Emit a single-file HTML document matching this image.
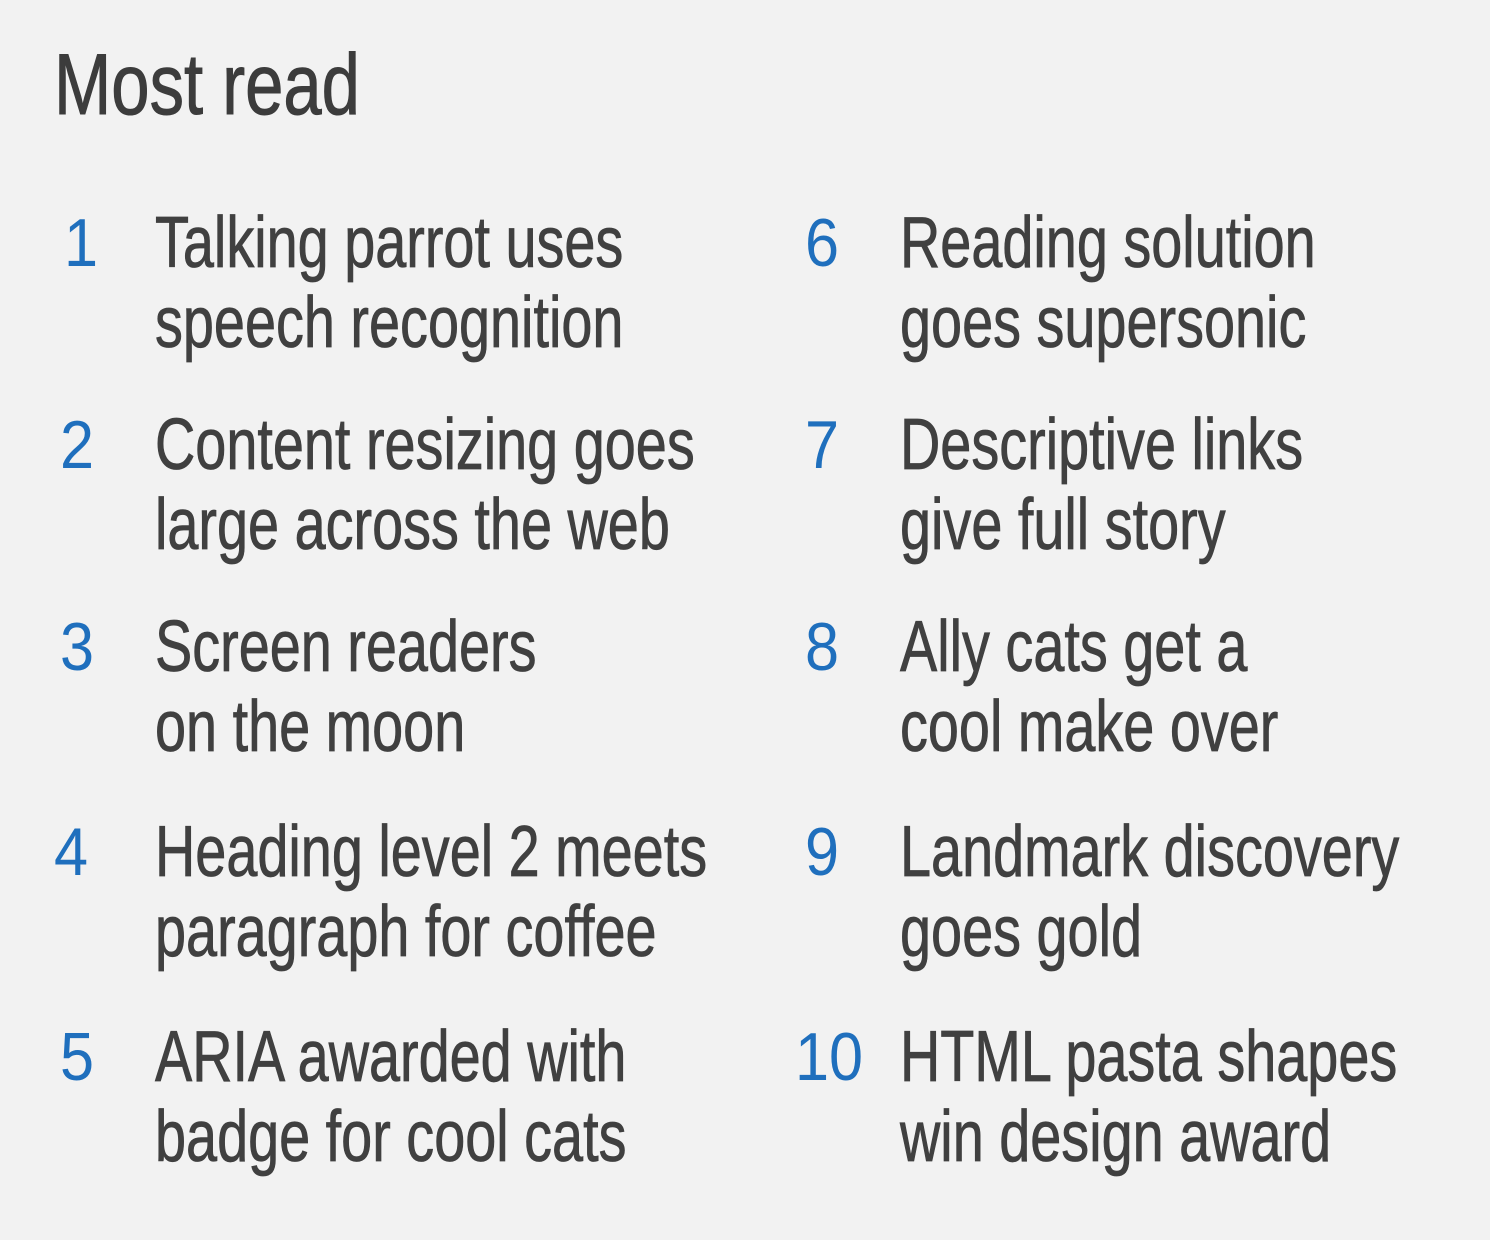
<!DOCTYPE html>
<html><head><meta charset="utf-8"><style>
html,body{margin:0;padding:0;background:#f2f2f2;}
body{width:1490px;height:1240px;position:relative;overflow:hidden;font-family:"Liberation Sans",sans-serif;color:#404040;}
.t{position:absolute;font-size:72px;line-height:72px;white-space:nowrap;transform:scaleX(0.775);transform-origin:0 0;-webkit-text-stroke:0.8px #404040;}
.n{position:absolute;font-size:68px;line-height:72px;color:#1f6fbd;transform:scaleX(0.9);transform-origin:0 0;}
h1{position:absolute;left:54px;top:42px;margin:0;font-size:86px;line-height:86px;font-weight:normal;transform:scaleX(0.8);transform-origin:0 0;white-space:nowrap;color:#3c3c3c;-webkit-text-stroke:1px #3c3c3c;}
</style></head><body>
<h1>Most read</h1>

<div class="n" style="left:64px;top:207px">1</div>
<div class="t" style="left:155px;top:207px">Talking parrot uses</div>
<div class="t" style="left:155px;top:287px">speech recognition</div>

<div class="n" style="left:60px;top:409px">2</div>
<div class="t" style="left:155px;top:409px">Content resizing goes</div>
<div class="t" style="left:155px;top:489px">large across the web</div>

<div class="n" style="left:60px;top:611px">3</div>
<div class="t" style="left:155px;top:611px">Screen readers</div>
<div class="t" style="left:155px;top:691px">on the moon</div>

<div class="n" style="left:54px;top:816px">4</div>
<div class="t" style="left:155px;top:816px">Heading level 2 meets</div>
<div class="t" style="left:155px;top:896px">paragraph for coffee</div>

<div class="n" style="left:60px;top:1021px">5</div>
<div class="t" style="left:155px;top:1021px">ARIA awarded with</div>
<div class="t" style="left:155px;top:1101px">badge for cool cats</div>

<div class="n" style="left:805px;top:207px">6</div>
<div class="t" style="left:900px;top:207px">Reading solution</div>
<div class="t" style="left:900px;top:287px">goes supersonic</div>

<div class="n" style="left:805px;top:409px">7</div>
<div class="t" style="left:900px;top:409px">Descriptive links</div>
<div class="t" style="left:900px;top:489px">give full story</div>

<div class="n" style="left:805px;top:611px">8</div>
<div class="t" style="left:900px;top:611px">Ally cats get a</div>
<div class="t" style="left:900px;top:691px">cool make over</div>

<div class="n" style="left:805px;top:816px">9</div>
<div class="t" style="left:900px;top:816px">Landmark discovery</div>
<div class="t" style="left:900px;top:896px">goes gold</div>

<div class="n" style="left:795px;top:1021px">10</div>
<div class="t" style="left:900px;top:1021px">HTML pasta shapes</div>
<div class="t" style="left:900px;top:1101px">win design award</div>
</body></html>
